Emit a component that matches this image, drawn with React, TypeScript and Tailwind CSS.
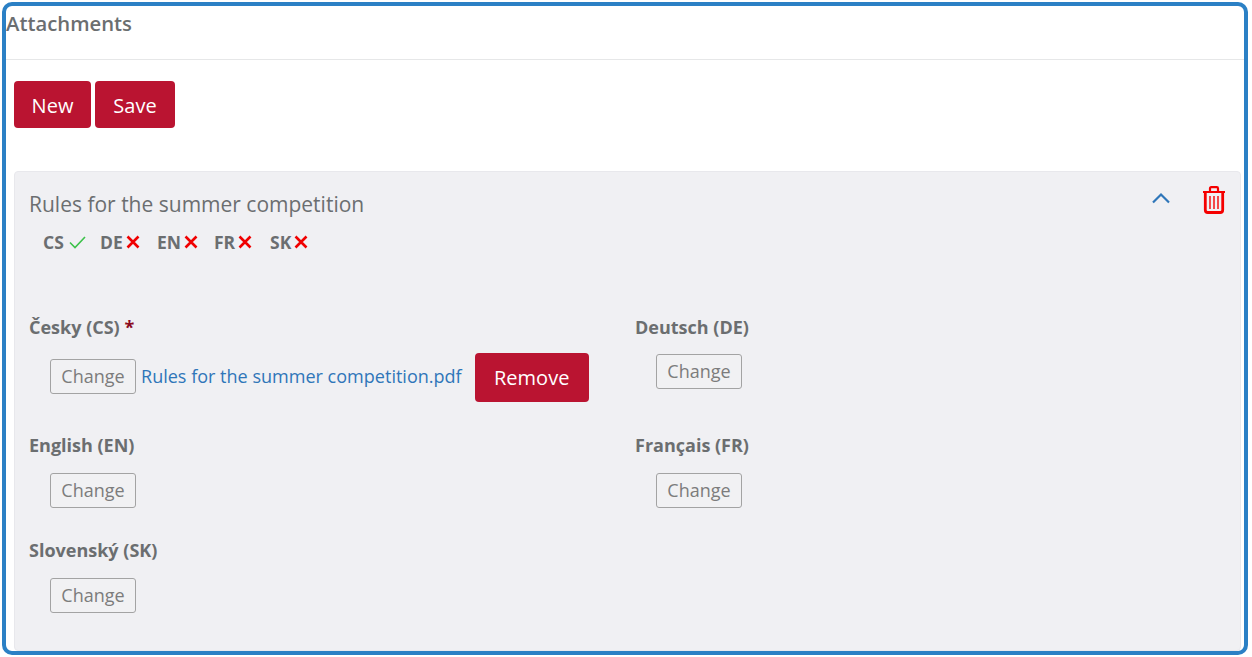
import React from "react";

function Cross() {
  return (
    <svg width="14" height="14" viewBox="0 0 14 14" className="ml-[3px]">
      <path d="M1.5 1.5L12.5 12.5M12.5 1.5L1.5 12.5" stroke="#f00000" strokeWidth="2.6" fill="none" />
    </svg>
  );
}

function Check() {
  return (
    <svg width="17" height="14" viewBox="0 0 17 14" className="ml-[5px]">
      <path d="M1 7.5L6 12.5L16 2" stroke="#3cc24a" strokeWidth="1.6" fill="none" />
    </svg>
  );
}

function Trash() {
  return (
    <svg width="24" height="28" viewBox="0 0 24 28" fill="none" stroke="#f50000">
      <path d="M1 6H23" strokeWidth="2.2" />
      <path d="M8 5.5V2.5C8 1.8 8.5 1.2 9.2 1.2H14.8C15.5 1.2 16 1.8 16 2.5V5.5" strokeWidth="2.2" />
      <path d="M3.3 6V24C3.3 25.5 4.3 26.5 5.8 26.5H18.2C19.7 26.5 20.7 25.5 20.7 24V6" strokeWidth="2.8" />
      <path d="M8 10V23M12 10V23M16 10V23" strokeWidth="1.4" />
    </svg>
  );
}

function ChangeButton({ className = "" }: { className?: string }) {
  return (
    <button className={`h-[35px] w-[86px] rounded-[3px] border border-[#a3a3a3] bg-[#f1f1f3] text-[18px] text-[#7c7c7c] ${className}`}>
      Change
    </button>
  );
}

function Lang({ code, ok }: { code: string; ok?: boolean }) {
  return (
    <span className="flex items-center text-[17.5px] font-bold text-[#6b6e70]">
      {code}
      {ok ? <Check /> : <Cross />}
    </span>
  );
}

function Label({ children }: { children: React.ReactNode }) {
  return <div className="h-[24px] text-[18px] leading-[24px] font-bold text-[#6b6e70]">{children}</div>;
}

function RedButton({ children, className }: { children: React.ReactNode; className: string }) {
  return (
    <button className={`rounded-[4px] bg-[#ba1431] text-[20px] text-white ${className}`}>{children}</button>
  );
}

export default function App() {
  return (
    <div className="h-[657px] w-[1252px] bg-white p-[2px] font-['Open_Sans',sans-serif]">
      <div className="flex h-[653px] w-[1246px] flex-col overflow-hidden rounded-[10px] border-4 border-[#2b80c5] bg-white">
        <div className="h-[54px] border-b border-[#e6e7e8] pt-[1px] text-[20.3px] leading-[32px] font-semibold text-[#6b6e70]">
          Attachments
        </div>
        <div className="flex gap-[4px] pt-[21px] pl-[8px]">
          <RedButton className="h-[47px] w-[77px] pt-[2px]">New</RedButton>
          <RedButton className="h-[47px] w-[80px] pt-[2px]">Save</RedButton>
        </div>
        <div className="mt-[43px] mr-[3px] ml-[8px] flex-1 rounded-[4px] border border-[#e8e8ec] bg-[#f0f0f3] pt-[16px] pl-[14px]">
          <div className="flex items-start justify-between">
            <div className="text-[21px] leading-[32px] text-[#6b6e70]">Rules for the summer competition</div>
            <div className="mt-[-2px] mr-[14px] flex items-center gap-[31px]">
              <svg className="mt-[-4px]" width="20" height="12" viewBox="0 0 20 12" fill="none">
                <path d="M2 10.5L10 2.5L18 10.5" stroke="#2f76b9" strokeWidth="2.2" />
              </svg>
              <Trash />
            </div>
          </div>
          <div className="mt-[10px] ml-[14px] flex h-[24px] items-center">
            <div className="w-[57px]"><Lang code="CS" ok /></div>
            <div className="w-[57px]"><Lang code="DE" /></div>
            <div className="w-[57px]"><Lang code="EN" /></div>
            <div className="w-[56px]"><Lang code="FR" /></div>
            <div><Lang code="SK" /></div>
          </div>
          <div className="mt-[61px] grid grid-cols-[606px_1fr]">
            <div className="h-[118px]">
              <Label>
                Česky (CS) <span className="text-[#8b0a1e]">*</span>
              </Label>
              <div className="mt-[14px] flex items-center pl-[21px]">
                <ChangeButton className="mt-[-2px]" />
                <a className="mt-[-2px] ml-[5px] text-[18.05px] text-[#2f76b9]">Rules for the summer competition.pdf</a>
                <RedButton className="ml-[13px] h-[49px] w-[114px]">Remove</RedButton>
              </div>
            </div>
            <div className="h-[118px]">
              <Label>Deutsch (DE)</Label>
              <div className="mt-[15px] pl-[21px]"><ChangeButton /></div>
            </div>
            <div className="h-[105px]">
              <Label>English (EN)</Label>
              <div className="mt-[16px] pl-[21px]"><ChangeButton /></div>
            </div>
            <div className="h-[105px]">
              <Label>Français (FR)</Label>
              <div className="mt-[16px] pl-[21px]"><ChangeButton /></div>
            </div>
            <div>
              <Label>Slovenský (SK)</Label>
              <div className="mt-[16px] pl-[21px]"><ChangeButton /></div>
            </div>
          </div>
        </div>
      </div>
    </div>
  );
}
